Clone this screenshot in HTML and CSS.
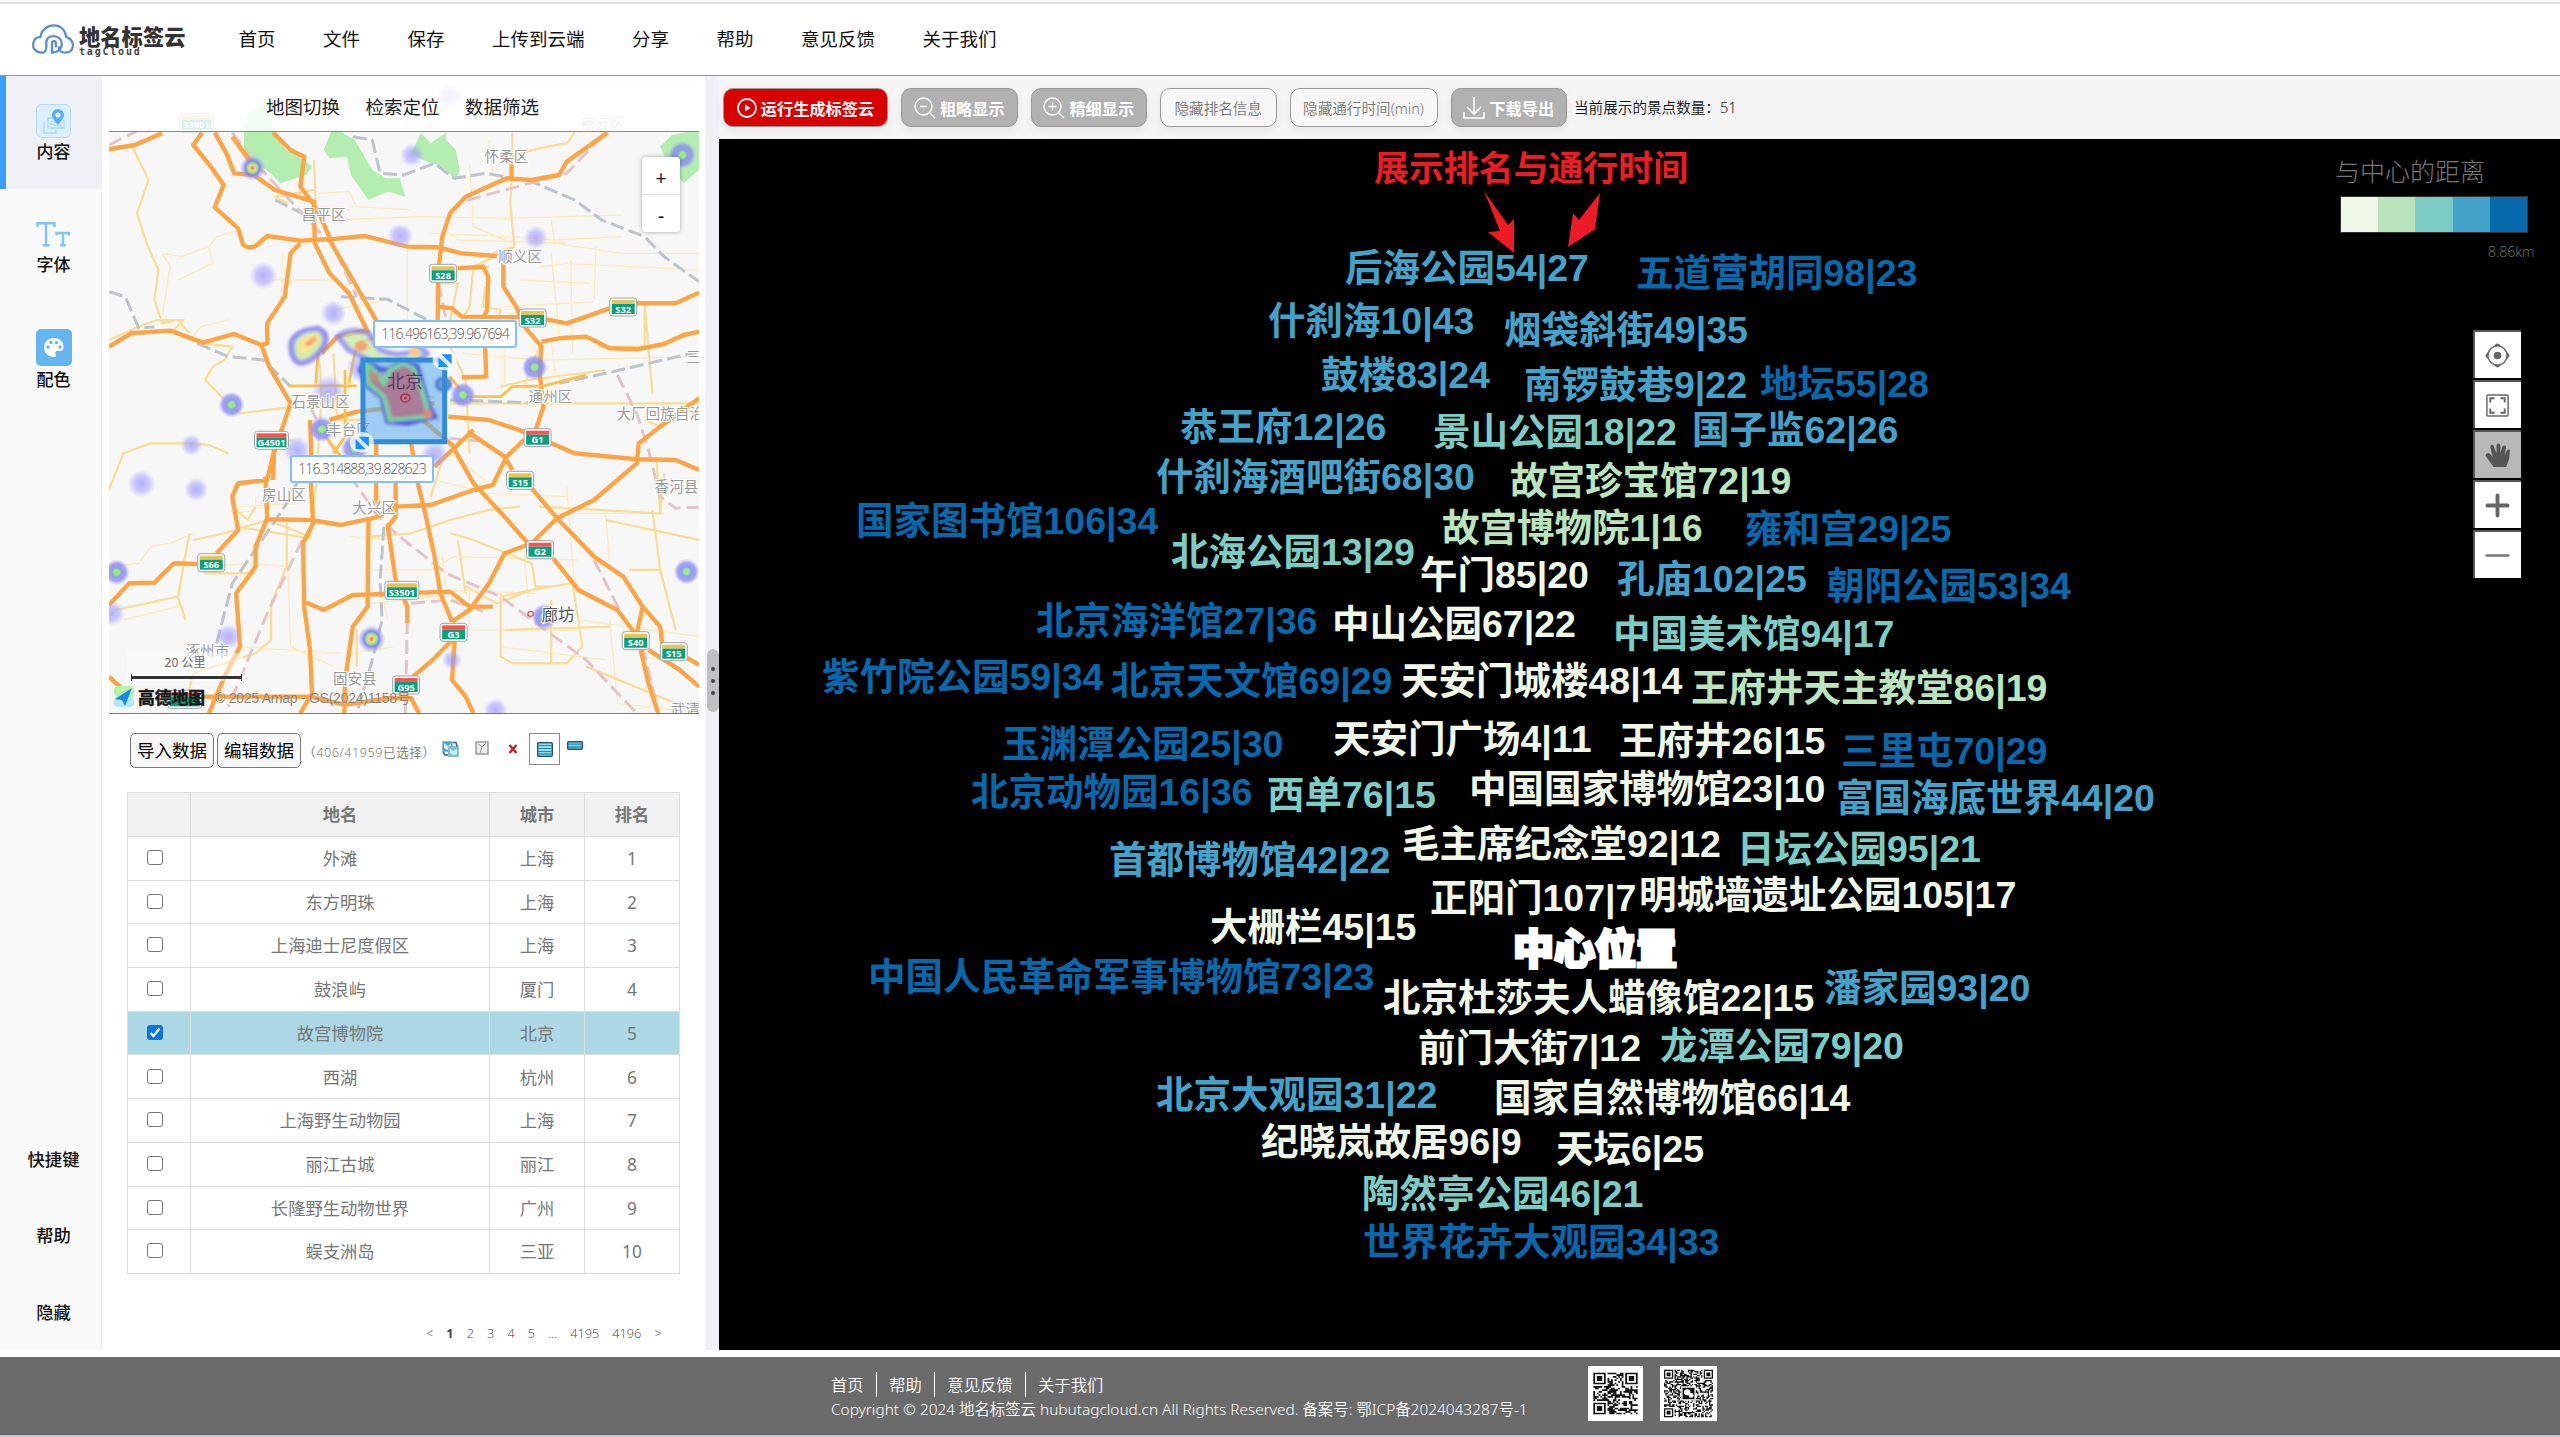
FILE: index.html
```html
<!DOCTYPE html>
<html lang="zh-CN">
<head>
<meta charset="utf-8">
<title>地名标签云</title>
<link rel="stylesheet" href="styles.css">
</head>
<body>
<header class="topbar">
  <div class="logo">
    <svg class="logo-mark" viewBox="0 0 44 32" fill="none" stroke="#5a8fd0" stroke-width="2.4" stroke-linecap="round">
      <path d="M12 29.500H9.500C4 29 1 25.500 1.500 20.500C2 16 5 13.500 9 13.500C10 6 16 1.500 23 1.500C30 1.500 34.500 6 35.500 13C40 15 43 18.500 42.500 23C42 27 39 29.500 34 29.500C30 29.500 28 27 28 24"/>
      <path d="M13 29C16 27 15 23 15 20C15 15 18 12.500 22 12.500C28 12.500 31 16 31 20.500C31 26 27 29.500 21 29.500V20C21 17 25 17 25 20V23"/>
    </svg>
    <div class="logo-words"><b>地名标签云</b><i>tagCloud</i></div>
  </div>
  <nav class="main-nav">
    <a>首页</a><a>文件</a><a>保存</a><a>上传到云端</a><a>分享</a><a>帮助</a><a>意见反馈</a><a>关于我们</a>
  </nav>
</header>

<main class="workspace">
  <aside class="sidebar">
    <div class="side-item active">
      <svg width="35" height="34" viewBox="0 0 35 34"><rect x=".5" y=".5" width="34" height="33" rx="5" fill="#dceefa" stroke="#b5dbf5"/><path d="M8 17v12h12v-3M12 14h5M12 14v10h16v-8M15 17c4 2 8 1 11 5M14 20c4 0 6 3 12 2" fill="none" stroke="#a9d8f8" stroke-width="1.300"/><path d="M22 21c-4-5-6-7-6-10a6 6 0 0 1 12 0c0 3-2 5-6 10z" fill="#58aef0"/><circle cx="22" cy="11" r="2.600" fill="#dceefa"/></svg>
      <span>内容</span>
    </div>
    <div class="side-item">
      <svg width="35" height="34" viewBox="0 0 35 34" fill="none" stroke="#7cc4fa" stroke-width="2.400"><path d="M1.500 10V6.300H18.500V10M10 6.500V28M6.500 28.300H13.500M20.500 18.500V16H33V18.500M27 16V28M24 28.300H30"/></svg>
      <span>字体</span>
    </div>
    <div class="side-item">
      <svg width="36" height="37" viewBox="0 0 36 37"><rect width="36" height="37" rx="5" fill="#64b5f2"/><path d="M18 9c-6 0-10 4-10 9.500S13 28 18 28c2 0 2.500-1.500 1.500-3s0-3 2-3h3c2 0 3-2 3-4C27.500 13 24 9 18 9z" fill="#fff"/><g fill="#64b5f2"><circle cx="12" cy="18" r="1.700"/><circle cx="15" cy="13.500" r="1.700"/><circle cx="20.500" cy="13.500" r="1.700"/><circle cx="24" cy="18" r="1.700"/></g></svg>
      <span>配色</span>
    </div>
    <div class="side-foot"><span>快捷键</span><span>帮助</span><span>隐藏</span></div>
  </aside>

  <section class="data-panel">
    <div class="map">
      <svg class="map-art" viewBox="109 82 590 632" preserveAspectRatio="none">
        <defs>
          <radialGradient id="g-faint"><stop offset="0" stop-color="#8f8cff" stop-opacity=".65"/><stop offset=".55" stop-color="#9d9aff" stop-opacity=".5"/><stop offset="1" stop-color="#a9a6ff" stop-opacity="0"/></radialGradient>
          <radialGradient id="g-hot"><stop offset="0" stop-color="#8f4"/><stop offset=".2" stop-color="#9fe690"/><stop offset=".38" stop-color="#8593ee" stop-opacity=".9"/><stop offset=".7" stop-color="#8b88f8" stop-opacity=".75"/><stop offset="1" stop-color="#a9a6ff" stop-opacity="0"/></radialGradient>
          <radialGradient id="g-red"><stop offset="0" stop-color="#f66"/><stop offset=".22" stop-color="#f0e070"/><stop offset=".38" stop-color="#8ee69b"/><stop offset=".55" stop-color="#7c7cf0" stop-opacity=".9"/><stop offset="1" stop-color="#a9a6ff" stop-opacity="0"/></radialGradient>
          <filter id="soft" x="-10%" y="-10%" width="120%" height="120%"><feGaussianBlur stdDeviation="4 5"/></filter>
        </defs>
        <rect x="109" y="82" width="590" height="632" fill="#f7f7f7"/>
        <g transform="matrix(.389 0 0 .3333 100 120)" fill="none" stroke-linejoin="round">
          <g fill="#b3edb0">
            <path d="M370 38L370 90L400 130L440 160L462 190L530 165L545 140L520 115L480 90L445 38V-60L380-20z"/>
            <path d="M600 20L575 90L590 115L635 110L645 165L690 240L740 215L785 230L770 175L735 175L700 150L655 60L640 50z"/>
            <path d="M825 38L800 100L830 120L880 140L915 180L925 150L915 90L890 60L890 38L850 70z"/>
            <path d="M1440 80L1470 45L1540 30V150L1500 190L1460 130z"/>
          </g>
          <g class="r-thin">
            <path d="M160 400L210 410L280 380L300 350L360 330M160 400L180 440L160 590M280 380L290 430L200 480M470 400L465 540M600 300L820 290L1050 295L1340 285M640 270L560 268M790 360L790 600M850 340L1050 350L1170 360L1340 350M950 130L960 320L1060 370M1160 300L1170 370L1340 400L1540 400M1130 440L1200 430L1360 440L1540 450M1160 400L1180 640M1210 420L1215 700M1275 380L1270 540M1080 480L1260 490M1040 560L1270 545M900 340L920 360L1200 370M230 660L260 620L330 600M440 480L600 480M600 570L740 540M1000 60L1010 170M560 220L640 215L660 260L800 270M1160 660L1170 760M1040 680L1040 790M930 700L1130 720L1540 710"/>
            <path d="M23 1340L100 1330L130 1280L180 1270L240 1240M270 1340L380 1330L480 1340M350 1160L520 1150M350 1180L400 1170V1130M640 1250L760 1260M700 1350L850 1350L910 1310L1230 1320M880 1310L890 1410L1120 1420M950 1390L950 1530L1230 1530M1090 1300L1100 1430M1150 1180L1450 1180M1200 1100L1220 1400M1300 1180L1310 1330M800 1430L880 1430M700 1450L860 1430M480 1240L490 1580L600 1640M360 1580L480 1590L620 1600M1030 1580L1300 1620M1230 1500L1540 1550M640 1600L760 1580M640 1650L640 1750M860 1080L1000 1120L1200 1130M900 1000L1000 1090M720 1400L740 1500M1310 1500L1330 1750L1480 1770M60 1500L200 1460L220 1300"/>
          </g>
          <g class="r-yellow">
            <path d="M85 85L125 180L95 280L120 370L150 450L140 540L160 610L200 600L230 640M23 660L120 610L150 600L215 600L190 630L260 670L340 680L320 720L290 740L270 780L330 850L360 880L500 860M1060 38L1060 120L1055 250L1065 380L960 440L950 560L930 600M1065 380L1010 400M1075 100L1150 80L1200 70L1220 38M480 250L450 230L550 210M550 120L555 270M960 450L1000 440M990 500L985 560L1030 570L1020 600M1280 680L1400 680L1400 550L1420 820M870 490L920 490L900 600M560 670L570 830L560 1000M600 700L610 900L680 900M700 830L860 830M1090 800L1130 680M900 850L1540 850M1030 800L1100 780L1300 750M780 600L900 680L940 780L950 1000"/>
            <path d="M23 1110L60 1000L130 970L215 970L280 975L330 1000M350 1090L340 1160L380 1200L400 1160M430 970L500 960M230 1240L200 1430L40 1470M240 1260L320 1240L430 1200L540 1250L565 1010M260 1330L270 1360L400 1360M480 1200L480 1340L440 1450L440 1560L400 1600L240 1660L220 1750M350 1220L540 1255M690 1250L800 1240L900 1200L1000 1170L1080 1160M900 1240L960 1260L1110 1330L1120 1400L1160 1400M1130 1160L1440 1180L1450 1060M1430 1010L1440 1180M920 1260L940 1420M1360 1350L1440 1350M1030 1420V1610L1060 1630L1200 1630L1240 1580L1215 1390L1110 1410L1030 1430M1040 1530L1310 1520M1160 1440V1630M660 1530L660 1640M1300 1200L1540 1260M850 1130L880 1020M1400 900L1440 920M940 1400L1020 1450L1110 1410M1250 1640L1480 1750M1420 1170L1440 1350L1480 1530M200 1430L220 1500"/>
          </g>
          <g class="r-rail">
            <path d="M650 50L700 60L720 160L780 165L860 130L910 175L990 160L1110 185L1220 240L1290 300L1400 350L1450 410L1540 485M23 515L65 530L100 625L140 620M250 670L330 710L420 720L490 800M620 530L740 538L850 605M450 240L520 280M900 840L1100 848M1540 695L1300 760L1180 790M510 1080L480 1150L440 1220L340 1390L300 1570M730 1220L720 1380L725 1500L700 1620L660 1780"/>
          </g>
          <g class="r-pink">
            <path d="M23 75L100 30M340 38L400 130L520 280L600 380L660 530M1290 50L1200 160L930 245M540 860L570 930L650 1080L710 1180L760 1240L890 1360L1030 1430L1110 1500L1250 1620L1380 1780M520 1260L430 1480L330 1760M800 1450L900 1440L1000 1480M790 1500L785 1780M870 490L890 600M1330 765L1380 880L1410 990L1440 1130L1480 1165L1540 1162M1270 1320L1340 1480L1400 1600L1430 1750M900 955L990 965"/>
          </g>
          <g class="r-orange">
            <path d="M23 88L90 75L160 40M262 38L240 75L285 140L318 195L295 262L355 325L368 375Q385 388 400 378L430 348L515 362L590 358L680 348L790 380L870 382L930 400L1020 408M295 38L325 100L345 160L395 165L450 210L550 245L552 370L590 460L640 520L690 640M340 50L390 130M445 38L490 90L525 110L515 200L560 270L600 380L650 480L712 605M868 600L870 450L880 350L900 280L940 230L1045 175L1110 180L1180 165L1200 125L1305 38M1058 175V130M1037 425L1037 500L1070 560L1095 625L1135 680L1130 760L1140 860L1120 930M920 445L985 440L998 470L995 570L985 595M870 560L905 565L930 590L1120 592L1200 610L1250 590L1310 565M1380 550L1480 550L1540 518M23 680L80 640L180 632L265 668L345 642L415 675L430 670L430 610L475 530L490 400L515 370M415 675L435 740L490 850L470 920L447 1000L445 1080M1135 665L1180 655L1250 650L1310 685L1380 688L1450 672L1500 645L1540 635M990 680L993 770L930 772M895 890L1000 900L1090 935L1220 1000L1380 1018L1480 1020L1540 1050M570 700L610 650L690 630M590 900L660 875L860 850M540 900L545 1070"/>
            <path d="M1540 835L1440 920L1385 970L1380 1030L1270 1140L1175 1195L1110 1270L1040 1300L1000 1390L950 1470L905 1505M23 1455L75 1390L140 1388L190 1330L250 1332M300 1300L355 1230L340 1130L355 1090L430 1080L448 990M425 1070L430 1195L400 1280L400 1340L350 1420L360 1580L320 1670L280 1780M430 1198L540 1200L620 1215L710 1192L760 1160L850 1155L960 1110L1010 1095L1045 1010L1090 960M540 1050L548 1210L522 1270L525 1460L540 1590L545 1720L515 1780M525 1445L575 1470L650 1425L735 1422M820 1418L900 1415L950 1460L1010 1460M690 1200L688 1460L650 1520L630 1680L628 1780M710 970V1180M760 1080V1190L740 1220L760 1380L790 1460V1510M800 970L815 1080L840 1200L860 1310L875 1420L905 1505M830 900L905 975L960 1090L1040 1190L1100 1270M945 935L1040 1010L1060 1050M1110 1105L1175 1195L1270 1310L1345 1370L1395 1460L1440 1520L1445 1570L1540 1635M905 1560L855 1620L805 1670M912 1560L905 1680L940 1730L960 1780M1165 1315L1230 1410L1330 1470L1375 1540M1395 1460L1380 1540M1390 1590L1410 1690L1435 1780M1410 1590L1490 1650L1540 1700M23 1670L60 1710M260 1730L540 1730L630 1755L740 1735L800 1735L820 1780M860 1040L960 930"/>
          </g>
          <path class="r-gold" d="M485 798L660 798M900 770L940 830L1030 830L1060 800L1140 798L1250 765M630 750V950L600 1000M700 655L660 670L640 790M560 700L555 790M580 950L620 1010"/>
        </g>
        <g id="map-heat"></g>
        <g id="map-labels"></g>
        <g transform="matrix(.389 0 0 .3333 100 120)">
          <g filter="url(#soft)">
            <path d="M492 670Q500 630 560 625Q590 640 575 680Q550 725 515 730Q490 720 492 670z" fill="#c9eba0" stroke="#8683ef" stroke-width="16" opacity=".85"/>
            <path d="M612 650Q640 620 690 640L720 690Q780 720 820 680L840 700L800 745L740 760L690 720L640 690z" fill="#c9eba0" stroke="#8683ef" stroke-width="16" opacity=".75"/>
            <path d="M510 680Q520 640 560 645Q570 660 545 680Q515 715 510 680z" fill="#ffe38a"/><path d="M525 672L548 652L560 658L535 680z" fill="#f69a72"/>
            <circle cx="672" cy="678" r="16" fill="#f5a070"/><circle cx="808" cy="695" r="14" fill="#f5c98b"/>
          </g>
          <rect x="676" y="720" width="210" height="245" fill="#56a9f0" fill-opacity=".55"/>
          <g filter="url(#soft)">
            <path d="M680 725L720 750L740 750L780 725L815 740L845 860L860 890L825 900L790 910L740 905L725 830L690 800L670 750z" fill="#8fb0c8" stroke="#5558dd" stroke-width="14"/>
            <path d="M682 730L700 745L730 790L745 750L780 730L805 745L825 800L840 860L845 890L745 900L730 830L690 790z" fill="#a97b98" stroke="#76d4a0" stroke-width="12"/>
            <circle cx="843" cy="882" r="13" fill="#d98a72"/><circle cx="705" cy="772" r="13" fill="#c08a80"/><circle cx="883" cy="793" r="18" fill="#69a7bd" stroke="#4e6fcf" stroke-width="8"/>
          </g>
          <rect x="676" y="720" width="210" height="245" fill="none" stroke="#2f8cdb" stroke-width="5" vector-effect="non-scaling-stroke"/>
          <circle cx="785" cy="834" r="12" fill="none" stroke="#b22a4a" stroke-width="4"/><circle cx="785" cy="834" r="4" fill="#b22a4a"/>
          <g><circle cx="886" cy="720" r="31" fill="#fff" fill-opacity=".75"/><path d="M878 703H904V733zM870 712V741H896z" fill="#1890ff"/><circle cx="673" cy="967" r="31" fill="#fff" fill-opacity=".75"/><path d="M665 950H691V980zM657 957V988H683z" fill="#1890ff"/></g>
          <circle cx="1107" cy="1482" r="7" fill="#fff" stroke="#e34" stroke-width="3"/>
        </g>
        <text x="387" y="388" class="m-city">北京</text>
      </svg>
      <div class="map-tabs"><span>地图切换</span><span>检索定位</span><span>数据筛选</span></div>
      <div class="coord coord-ne">116.496163,39.967694</div>
      <div class="coord coord-sw">116.314888,39.828623</div>
      <div class="map-zoom"><span>+</span><span>-</span></div>
      <div class="map-scale"><span>20 公里</span></div>
      <div class="map-copy">
        <svg width="24" height="22" viewBox="0 0 24 22"><rect x="1" width="20" height="11" rx="4" fill="#baf3a8"/><rect x="1" y="11" width="20" height="10" rx="4" fill="#b4e9fb"/><path d="M19 2L2 13L9 14L12 20L19 2z" fill="#1688f8"/></svg>
        <b>高德地图</b><span>© 2025 Amap - GS(2024)1158号</span>
      </div>
    </div>

    <div class="data-tools">
      <button>导入数据</button><button>编辑数据</button>
      <span class="count">（406/41959已选择）</span>
      <svg class="ico i-copy" width="17" height="16" viewBox="0 0 17 16"><path d="M.5.500h10v10H.500z" fill="#3fa8d8" stroke="#9bb"/><path d="M2 2l4 3 3-3v5L5 9 2 7z" fill="#d4f4fc"/><path d="M6.500 5.500h10v10h-10z" fill="#6bc5e8" stroke="#9bb"/><path d="M8 7l3 3 4-2v5l-4 1-3-2z" fill="#c5f1fb"/><path d="M11 1.500h3l1 4M1 11l2 3h3" fill="none" stroke="#25c" stroke-width="1.500"/></svg>
      <svg class="ico i-cut" width="14" height="14" viewBox="0 0 14 14"><path d="M1 1h12v12H1z" fill="#eee" stroke="#999" stroke-width="1.500"/><path d="M3 3l4 3 4-4M7 6L5 12" fill="none" stroke="#999"/></svg>
      <svg class="ico i-del" width="10" height="10" viewBox="0 0 10 10"><path d="M1.500 1L8.500 9M8.500 1L1.500 9" stroke="#b8272d" stroke-width="2.500"/></svg>
      <span class="boxed"><svg width="16" height="15" viewBox="0 0 16 15"><rect x=".7" y=".7" width="14.600" height="13.600" rx="1" fill="#cdf3fb" stroke="#234f78" stroke-width="1.400"/><path d="M1 3.500H15M1 6.500H15M1 9.500H15M1 12H15" stroke="#158db8" stroke-width="1.400"/></svg></span>
      <svg class="ico i-bar" width="16" height="9" viewBox="0 0 16 9"><rect x=".7" y=".7" width="14.600" height="7.600" rx="1" fill="#8fe0f5" stroke="#234f78" stroke-width="1.400"/><path d="M1 3.200H15M1 6H15" stroke="#158db8" stroke-width="1.300"/></svg>
    </div>

    <table class="places">
      <colgroup><col class="col-pick"><col class="col-name"><col class="col-city"><col class="col-rank"></colgroup>
      <thead><tr><th></th><th>地名</th><th>城市</th><th>排名</th></tr></thead>
      <tbody>
        <tr><td><i class="cb"></i></td><td>外滩</td><td>上海</td><td>1</td></tr>
        <tr><td><i class="cb"></i></td><td>东方明珠</td><td>上海</td><td>2</td></tr>
        <tr><td><i class="cb"></i></td><td>上海迪士尼度假区</td><td>上海</td><td>3</td></tr>
        <tr><td><i class="cb"></i></td><td>鼓浪屿</td><td>厦门</td><td>4</td></tr>
        <tr class="picked"><td><i class="cb on"><svg width="16" height="15" viewBox="0 0 16 15"><path d="M3.500 8L6.500 11L12.500 3.500" fill="none" stroke="#fff" stroke-width="2.200"/></svg></i></td><td>故宫博物院</td><td>北京</td><td>5</td></tr>
        <tr><td><i class="cb"></i></td><td>西湖</td><td>杭州</td><td>6</td></tr>
        <tr><td><i class="cb"></i></td><td>上海野生动物园</td><td>上海</td><td>7</td></tr>
        <tr><td><i class="cb"></i></td><td>丽江古城</td><td>丽江</td><td>8</td></tr>
        <tr><td><i class="cb"></i></td><td>长隆野生动物世界</td><td>广州</td><td>9</td></tr>
        <tr><td><i class="cb"></i></td><td>蜈支洲岛</td><td>三亚</td><td>10</td></tr>
      </tbody>
    </table>
    <div class="pager"><span>&lt;</span><b>1</b><span>2</span><span>3</span><span>4</span><span>5</span><span>...</span><span>4195</span><span>4196</span><span>&gt;</span></div>
  </section>

  <div class="splitter"><div class="grip"><i></i><i></i><i></i></div></div>

  <section class="stage">
    <div class="toolbar">
      <button class="btn run"><svg width="20" height="20" viewBox="0 0 20 20" fill="none" stroke="#fff" stroke-width="1.800"><circle cx="10" cy="10" r="9"/><path d="M8 6.500L13.500 10L8 13.500z" fill="#fff" stroke="none"/></svg>运行生成标签云</button>
      <button class="btn solid"><svg width="22" height="22" viewBox="0 0 22 22" fill="none" stroke="#fff" stroke-width="1.400"><circle cx="9.500" cy="9.500" r="8.500"/><path d="M6 9.500H13M15.500 15.500L21 21"/></svg>粗略显示</button>
      <button class="btn solid"><svg width="22" height="22" viewBox="0 0 22 22" fill="none" stroke="#fff" stroke-width="1.400"><circle cx="9.500" cy="9.500" r="8.500"/><path d="M5.500 9.500H13.500M9.500 5.500V13.500M15.500 15.500L21 21"/></svg>精细显示</button>
      <button class="btn line">隐藏排名信息</button>
      <button class="btn line wide">隐藏通行时间(min)</button>
      <button class="btn solid"><svg width="22" height="22" viewBox="0 0 22 22" fill="none" stroke="#fff" stroke-width="1.600"><path d="M11 0V17M4 10L11 17L18 10M1 15V21H21V15"/></svg>下载导出</button>
      <span class="shown">当前展示的景点数量：51</span>
    </div>
    <div class="canvas">
      <div class="note">展示排名与通行时间</div>
      <svg class="arrows" width="130" height="64" viewBox="1480 190 130 64"><path d="M1484 191L1508 225L1514 219V253L1488 232L1500 231zM1600 193L1595 228H1589L1597 228L1568 247L1573 213L1579 220z" fill="#ed1c24"/></svg>
      <div id="cloud"></div>
      <div class="center-tag">中心位置</div>
      <div class="legend">
        <p>与中心的距离</p>
        <div class="ramp"><i></i><i></i><i></i><i></i><i></i></div>
        <small>8.86km</small>
      </div>
      <div class="view-tools">
        <span><svg viewBox="0 0 26 26"><circle cx="13" cy="13" r="10" fill="none" stroke="#666" stroke-width="1.500"/><circle cx="13" cy="13" r="4" fill="#666"/><path d="M9.500 3Q13-2 16.500 3zM9.500 23Q13 28 16.500 23zM3 9.500Q-2 13 3 16.500zM23 9.500Q28 13 23 16.500z" fill="#666"/></svg></span>
        <span><svg viewBox="0 0 26 26" fill="none" stroke="#666"><rect x="2" y="2" width="22" height="22" rx="1" stroke-width="1.500"/><path d="M5.500 10V5.500H10M16 5.500H20.500V10M20.500 16V20.500H16M10 20.500H5.500V16" stroke-width="2"/></svg></span>
        <span class="on"><svg viewBox="0 0 26 26"><path d="M9 25L1 14Q0 11 3 10.500Q5 10.500 8 15L5.500 4Q6 1 8.500 2L12 11L12 2Q14-1 16 2V11L18 4Q20 1 22 4L20.500 13L22.500 8Q25 5.500 26 8L25 17L22 25z" fill="#555"/></svg></span>
        <span><svg viewBox="0 0 26 26" stroke="#666" stroke-width="4" stroke-linecap="round"><path d="M13 2.500V23.500M2.500 13H23.500"/></svg></span>
        <span><svg viewBox="0 0 26 26" stroke="#777" stroke-width="2.400" stroke-linecap="round"><path d="M1.500 13H24.500"/></svg></span>
      </div>
    </div>
  </section>
</main>

<footer class="footer">
  <div class="foot-text">
    <div class="foot-links"><a>首页</a><a>帮助</a><a>意见反馈</a><a>关于我们</a></div>
    <p>Copyright © 2024 地名标签云 hubutagcloud.cn All Rights Reserved. 备案号: 鄂ICP备2024043287号-1</p>
  </div>
  <svg class="qr qr-a" viewBox="-3 -4 31 33" preserveAspectRatio="none" data-n="25" data-seed="7"></svg>
  <svg class="qr qr-b" viewBox="-3 -3 43 43" preserveAspectRatio="none" data-n="37" data-seed="23"></svg>
</footer>
<script src="app.js"></script>
</body>
</html>
```
FILE: styles.css
```css
* { box-sizing: border-box; }
body {
  margin: 0; width: 2560px; height: 1437px; overflow: hidden; background: #fff;
  font-family: "Noto Sans", "Noto Sans CJK SC", sans-serif; color: #111;
  display: flex; flex-direction: column;
}
button { font-family: inherit; margin: 0; }

.topbar {
  height: 76px; border-top: 2px solid #fff; box-shadow: inset 0 2px #e0e0e0;
  border-bottom: 1px solid #999; display: flex; align-items: center; padding-left: 31px; flex: none;
}
.logo { display: flex; width: 207.5px; gap: 4px; padding-top: 3px; }
.logo-mark { width: 44px; height: 31px; }
.logo-words { display: flex; flex-direction: column; white-space: nowrap; }
.logo-words b { font: 900 21.3px/23px "Noto Sans CJK SC", sans-serif; color: #333; }
.logo-words i { font: bold 10px/10px "DejaVu Sans Mono", monospace; letter-spacing: 1.8px; color: #444; }
.main-nav { display: flex; gap: 47.5px; font-size: 18.5px; line-height: 28px; }

.workspace { display: flex; height: 1274px; flex: none; }
.sidebar { width: 102px; background: #fafafa; border-right: 1px solid #f0f0f2; display: flex; flex-direction: column; flex: none; }
.side-item {
  height: 113px; display: flex; flex-direction: column; align-items: center; justify-content: center;
  gap: 2px; font-size: 17px; font-weight: 500; line-height: 24px; padding: 3px 0 0 6px; border-left: 0 solid #3b9cff;
}
.side-item.active { background: #f0f1f6; border-left-width: 6px; padding-left: 0; }
.side-foot { margin-top: auto; display: flex; flex-direction: column; align-items: center; padding-left: 6px; font-size: 17.3px; font-weight: 500; gap: 52.600px; line-height: 24px; padding-bottom: 25px; }

.data-panel { width: 603px; padding: 6px 6px 0 7px; flex: none; display: flex; flex-direction: column; }
.map { position: relative; height: 632px; width: 590px; border-bottom: 1px solid #777; overflow: hidden; flex: none; }
.map-art { width: 590px; height: 632px; display: block; }
.r-thin path, .r-yellow path, .r-rail path, .r-pink path, .r-orange path, .r-gold { vector-effect: non-scaling-stroke; }
.r-thin { stroke: #fdeab8; stroke-width: 1.3; }
.r-yellow { stroke: #f9dd96; stroke-width: 2.2; }
.r-rail { stroke: #bcc4ce; stroke-width: 3; stroke-dasharray: 14 5; }
.r-pink { stroke: #e3c4c8; stroke-width: 3; stroke-dasharray: 14 6; }
.r-orange { stroke: #fda544; stroke-width: 4.400; }
.r-gold { stroke: #fbc04d; stroke-width: 2.800; }
.m-label { font-size: 14.6px; fill: #999; stroke: #fff; stroke-width: 2; paint-order: stroke; text-anchor: middle; }
.m-label.dark { fill: #555; font-size: 16.500px; }
.m-city { font-size: 18px; fill: #5a3d58; }
.m-shield { font: bold 9.300px "Noto Sans", sans-serif; fill: #fff; text-anchor: middle; }
.map-tabs {
  position: absolute; left: 0; top: 0; width: 590px; height: 50px; background: rgba(255,255,255,.84);
  border-bottom: 1px solid #888; display: flex; gap: 25.500px; padding-left: 157px; line-height: 50px; font-size: 18.500px; color: #222;
}
.coord {
  position: absolute; width: 144px; height: 28px; background: #fff; border: 2px solid #7fc0fc; border-radius: 3px;
  font: 300 14px/23px "Open Sans", "Noto Sans", sans-serif; letter-spacing: -.9px; color: #555; text-align: center; white-space: nowrap;
}
.coord-ne { left: 264px; top: 238px; }
.coord-sw { left: 181px; top: 373px; }
.map-zoom { position: absolute; left: 533px; top: 75px; width: 38px; height: 75px; border-radius: 4px; background: #fff; box-shadow: 0 0 4px rgba(0,0,0,.35); display: flex; flex-direction: column; }
.map-zoom span { height: 37px; text-align: center; font-size: 19px; line-height: 42px; }
.map-zoom span + span { border-top: 1px solid #e5e5e5; height: 38px; }
.map-scale { position: absolute; left: 18px; top: 571px; width: 116px; height: 28px; background: rgba(255,255,255,.5); text-align: center; font-size: 12px; line-height: 20px; color: #666; }
.map-scale::after { content: ""; position: absolute; left: 4px; top: 21px; width: 109px; height: 7px; border: solid #333; border-width: 0 1px; background: linear-gradient(#333, #333) center/100% 3px no-repeat; }
.map-copy { position: absolute; left: 4px; top: 604px; display: flex; align-items: center; height: 22px; white-space: nowrap; }
.map-copy b { font-size: 16.800px; font-weight: 700; margin-left: 1px; width: 77px; -webkit-text-stroke: .5px #222; }
.map-copy span { font: 14px "Liberation Sans", "Noto Sans CJK SC", sans-serif; letter-spacing: -.25px; color: #888; }

.data-tools { height: 35px; margin-top: 19px; padding-left: 21px; display: flex; align-items: flex-start; flex: none; }
.data-tools button { width: 84px; height: 35px; border: 1px solid #777; border-radius: 5px; background: #f7f7f7; font-size: 17.500px; line-height: 31px; padding: 0; margin-right: 3px; white-space: nowrap; }
.count { font-size: 12.600px; font-weight: 350; line-height: 39px; letter-spacing: .55px; color: #777; width: 139px; white-space: nowrap; margin-left: -1px; }
.ico { margin-top: 8px; }
.i-cut { margin-left: 16px; }
.i-del { margin: 11px 11px 0 19px; }
.boxed { width: 31px; height: 32px; border: 1px solid #888; display: flex; align-items: center; justify-content: center; margin-right: 7px; }

.places { width: 553px; margin: 24px 0 0 18px; table-layout: fixed; border-collapse: collapse; font-size: 17.300px; font-weight: 400; color: #777; flex: none; }
.col-pick { width: 63px; } .col-name { width: 299px; } .col-city, .col-rank { width: 95px; }
.places th, .places td { border: 1px solid #ddd; padding: 0; text-align: center; height: 43.700px; line-height: 24px; }
.places td { padding-top: 1.5px; }
.places th { background: #f1f1f1; font-weight: 700; height: 44px; }
.places tr.picked td { background: #add8e6; }
.cb { display: block; width: 16px; height: 15px; margin: 0 auto 3px 19px; border: 1.500px solid #767676; border-radius: 3px; background: #fff; }
.cb.on { border: 0; background: #0a75dd; }
.cb svg { display: block; }
.pager { margin-top: auto; padding: 0 0 5px 317px; display: flex; gap: 13.100px; font: 300 12.700px/24px "Open Sans", sans-serif; color: #444; }
.pager b { font-weight: 700; }

.splitter { width: 14px; background: #f0f1f6; flex: none; display: flex; align-items: flex-start; justify-content: flex-end; }
.grip { margin-top: 573px; width: 12px; height: 63px; border-radius: 6px; background: #c0c0c0; display: flex; flex-direction: column; align-items: center; justify-content: center; gap: 8px; }
.grip i { width: 4px; height: 4px; border-radius: 50%; background: #444; }

.stage { width: 1841px; flex: none; display: flex; flex-direction: column; }
.toolbar { height: 63px; background: #f5f5f5; display: flex; gap: 13px; padding: 12px 0 0 4px; flex: none; }
.btn { width: 116.5px; height: 39px; border: 1px solid #999; border-radius: 10px; font-size: 16.200px; font-weight: 700; color: #fff; padding: 0; display: flex; align-items: center; justify-content: center; gap: 4px; box-shadow: 0 4px 10px rgba(0,0,0,.06); white-space: nowrap; }
.btn.run { width: 165px; background: #d90000; }
.btn.solid { background: #b1b1b1; }
.btn.line { background: #f7f7f7; font-size: 14.600px; font-weight: 350; color: #777; }
.btn.wide { width: 148px; }
.shown { font-size: 14.600px; line-height: 38px; margin-left: -6px; font-weight: 350; }

.canvas { position: relative; height: 1211px; background: #000; }
.note { position: absolute; left: 655px; top: 4px; font-size: 34.900px; line-height: 50px; font-weight: 700; color: #ed1c24; white-space: nowrap; }
.arrows { position: absolute; left: 761px; top: 51px; }
.tag { position: absolute; font: bold 37.500px/44px "Liberation Sans", "Noto Sans CJK SC", sans-serif; white-space: nowrap; }
.c0 { color: #f0f9e8; } .c1 { color: #bae4bc; } .c2 { color: #7bccc4; } .c3 { color: #43a2ca; } .c4 { color: #0868ac; }
.center-tag { position: absolute; left: 794px; top: 778px; font: 900 41px/58px "Noto Sans CJK SC", sans-serif; color: #fff; -webkit-text-stroke: 3px #fff; }
.legend { position: absolute; left: 1616px; top: 13px; width: 220px; color: #777; }
.legend p { margin: 0; font-size: 25px; font-weight: 300; line-height: 38px; }
.ramp { margin: 6px 0 0 5px; width: 188px; height: 37px; border: 1px solid #333; display: flex; }
.ramp i { flex: 1; }
.ramp i:nth-child(1) { background: #f0f9e8; } .ramp i:nth-child(2) { background: #bae4bc; } .ramp i:nth-child(3) { background: #7bccc4; }
.ramp i:nth-child(4) { background: #43a2ca; } .ramp i:nth-child(5) { background: #0868ac; }
.legend small { display: block; padding-left: 153px; font: 300 14px/20px "Open Sans", sans-serif; margin-top: 9px; }
.view-tools { position: absolute; left: 1754px; top: 191px; display: flex; flex-direction: column; gap: 2px; }
.view-tools span { width: 48px; height: 48px; background: #fff; border: solid #555; border-width: 2px 0 0 2px; display: flex; align-items: center; justify-content: center; }
.view-tools .on { background: #b8b8b8; }
.view-tools svg { width: 25px; height: 25px; margin-right: 1px; }

.footer { margin-top: 7px; height: 80px; background: #6b6b6b; border-bottom: 2px solid #c4c4cc; display: flex; color: #fff; padding-left: 831px; flex: none; }
.foot-text { width: 757px; padding-top: 15px; }
.foot-links { display: flex; font-size: 16.300px; font-weight: 350; line-height: 26px; }
.foot-links a { padding-right: 12.300px; margin-right: 12.300px; border-right: 1px solid #fff; height: 25px; }
.foot-links a:last-child { border: 0; }
.foot-text p { margin: 0; font-size: 15.400px; font-weight: 350; line-height: 25px; white-space: nowrap; }
.qr { background: #fff; height: 55px; margin-top: 9px; flex: none; }
.qr-a { width: 55px; } .qr-b { width: 57px; margin-left: 17px; }
```
FILE: app.js
```javascript
// Tag cloud: name, left edge, baseline, colour class (near to far)
const tags = [
  ["后海公园54|27",1345,280,3],["五道营胡同98|23",1636,285,4],["什刹海10|43",1268,333,3],["烟袋斜街49|35",1504,342,3],
  ["鼓楼83|24",1321,387,3],["南锣鼓巷9|22",1524,397,3],["地坛55|28",1760,396,4],["恭王府12|26",1180,439,3],
  ["景山公园18|22",1433,444,2],["国子监62|26",1692,442,3],["什刹海酒吧街68|30",1156,489,3],["故宫珍宝馆72|19",1510,493,1],
  ["国家图书馆106|34",856,533,4],["北海公园13|29",1171,564,2],["故宫博物院1|16",1442,540,1],["雍和宫29|25",1745,541,4],
  ["午门85|20",1420,587,0],["孔庙102|25",1617,591,3],["朝阳公园53|34",1827,598,4],["北京海洋馆27|36",1036,633,4],
  ["中山公园67|22",1332,636,0],["中国美术馆94|17",1613,646,2],["紫竹院公园59|34",822,689,4],["北京天文馆69|29",1111,693,4],
  ["天安门城楼48|14",1401,693,0],["王府井天主教堂86|19",1691,700,1],["玉渊潭公园25|30",1002,756,4],["天安门广场4|11",1333,751,0],
  ["王府井26|15",1619,753,0],["三里屯70|29",1841,763,4],["北京动物园16|36",971,804,4],["西单76|15",1267,807,2],
  ["中国国家博物馆23|10",1469,801,0],["富国海底世界44|20",1836,810,3],["首都博物馆42|22",1109,872,3],["毛主席纪念堂92|12",1402,856,0],
  ["日坛公园95|21",1737,861,2],["正阳门107|7",1430,910,0],["明城墙遗址公园105|17",1639,907,0],["大栅栏45|15",1210,939,0],
  ["中国人民革命军事博物馆73|23",868,989,4],["北京杜莎夫人蜡像馆22|15",1383,1010,0],["潘家园93|20",1824,1000,3],["前门大街7|12",1418,1060,0],
  ["龙潭公园79|20",1660,1058,2],["北京大观园31|22",1156,1107,3],["国家自然博物馆66|14",1494,1110,0],["纪晓岚故居96|9",1261,1154,0],
  ["天坛6|25",1556,1161,0],["陶然亭公园46|21",1362,1206,2],["世界花卉大观园34|33",1363,1254,4]
];
const cloud = document.getElementById("cloud");
for (const [name, x, base, c] of tags) {
  const el = document.createElement("span");
  el.className = "tag c" + c;
  el.textContent = name;
  el.style.left = x - 719 + "px";
  el.style.top = base - 139 - 34.5 + "px";
  cloud.append(el);
}

// Map overlays, in map grid units
const mx = x => (100 + x * 0.389).toFixed(1), my = y => (120 + y / 3).toFixed(1);
const heat = [
  [392,144,"red",13],[1497,105,"hot",14],[802,105,"faint",12],[772,348,"faint",13],[1120,353,"faint",12],[420,467,"faint",14],
  [600,580,"faint",13],[338,854,"hot",13],[570,928,"hot",13],[587,815,"faint",17],[1117,742,"hot",13],[933,825,"hot",13],[672,745,"faint",15],
  [235,975,"faint",11],[506,990,"faint",14],[107,1091,"faint",14],[247,1108,"faint",12],[860,1005,"faint",14],[655,985,"hot",14],
  [43,1357,"hot",13],[30,1480,"faint",13],[330,1550,"faint",13],[698,1557,"red",14],[1142,1490,"hot",13],[1508,1355,"hot",13],
  [905,1620,"faint",10],[1017,1770,"faint",12],[900,-70,"faint",13]
];
document.getElementById("map-heat").innerHTML = heat.map(([x, y, k, r]) =>
  `<circle cx="${mx(x)}" cy="${my(y)}" r="${r}" fill="url(#g-${k})"/>`).join("");

const names = [["怀柔区",1045,110],["昌平区",575,284],["顺义区",1080,410],["石景山区",567,845],["通州区",1158,828],["丰台区",640,928],
  ["大厂回族自治",1440,880],["房山区",473,1123],["大兴区",705,1162],["香河县",1482,1098],["涿州市",276,1590],["固安县",655,1674],
  ["武清",1505,1768],["密云区",1292,10],["三",1525,708],["廊坊",1177,1487,"dark"]];
const shields = [["S28",882,460],["S32",1112,594],["S32",1345,561],["G4501",441,961],["G1",1125,953],["S15",1080,1081],["S66",286,1328],
  ["G2",1131,1289],["S3501",776,1411],["G3",909,1537],["S40",1377,1562],["S15",1475,1595],["G95",787,1695],["",218,1738],["S3801",248,8]];
document.getElementById("map-labels").innerHTML = names.map(([t, x, y, k]) =>
  `<text class="m-label ${k || ""}" x="${mx(x)}" y="${+my(y) + 5.5}">${t}</text>`).join("") +
  shields.map(([t, x, y]) => {
    const w = t.length > 3 || !t ? 34 : 27, X = +mx(x), Y = +my(y);
    return `<rect x="${X - w / 2}" y="${Y - 9}" width="${w}" height="18" rx="3" fill="#fff" stroke="#9aa3ad"/>` +
      `<rect x="${X - w / 2 + 2}" y="${Y - 7}" width="${w - 4}" height="4" fill="${t[0] === "S" ? "#e8c35c" : "#ff5252"}"/>` +
      `<rect x="${X - w / 2 + 2}" y="${Y - 3}" width="${w - 4}" height="10" fill="#0aa07c"/>` +
      (t ? `<text class="m-shield" x="${X}" y="${Y + 5.5}">${t}</text>` : "");
  }).join("");

// QR codes: three finder squares plus data modules
for (const svg of document.querySelectorAll(".qr")) {
  const n = +svg.dataset.n;
  let s = +svg.dataset.seed, d = "";
  const rnd = () => (s = (s * 16807) % 2147483647) / 2147483647;
  const finder = (x, y) => {
    for (const [a, b] of [[0, 0], [n - 7, 0], [0, n - 7]]) {
      const u = x - a, v = y - b;
      if (u >= -1 && u <= 7 && v >= -1 && v <= 7) {
        if (u < 0 || v < 0 || u > 6 || v > 6) return 0;
        const m = Math.max(Math.abs(u - 3), Math.abs(v - 3));
        return m !== 2 ? 1 : 0;
      }
    }
    return -1;
  };
  for (let y = 0; y < n; y++) for (let x = 0; x < n; x++) {
    const f = finder(x, y), r = rnd();
    if (f === 1 || (f === -1 && r > 0.5)) d += `M${x} ${y}h1v1h-1z`;
  }
  svg.innerHTML = `<path d="${d}" fill="#111"/>` + (n > 30 ?
    `<rect x="13.500" y="13.500" width="10" height="10" fill="#111" stroke="#fff"/><circle cx="17.500" cy="17.500" r="2.400" fill="#fff"/><circle cx="20.500" cy="20" r="1.900" fill="#fff"/>` : "");
}
```
